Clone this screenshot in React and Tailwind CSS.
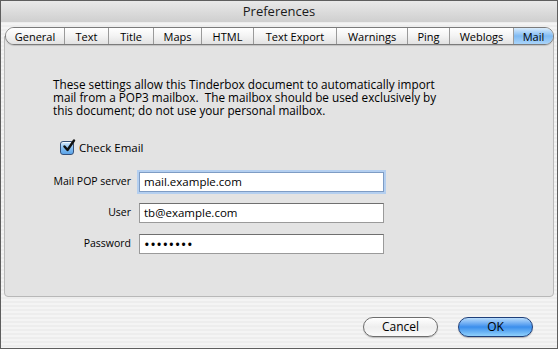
import React from 'react';

const tabs = [
  { label: 'General', w: 'w-[58px]' },
  { label: 'Text', w: 'w-[44px]' },
  { label: 'Title', w: 'w-[45px]' },
  { label: 'Maps', w: 'w-[48px]' },
  { label: 'HTML', w: 'w-[52px]' },
  { label: 'Text Export', w: 'w-[83px]' },
  { label: 'Warnings', w: 'w-[71px]' },
  { label: 'Ping', w: 'w-[42px]' },
  { label: 'Weblogs', w: 'w-[64px]' },
  { label: 'Mail', w: 'w-[40px]', active: true },
];

const fields = [
  { label: 'Mail POP server', value: 'mail.example.com', focus: true },
  { label: 'User', value: 'tb@example.com' },
  { label: 'Password', value: '••••••••', secret: true },
];

const CheckBox = () => (
  <div className="relative w-[14px] h-[14px] rounded-[3px] border border-[#34507a] bg-gradient-to-b from-[#d4e8fb] via-[#86bff2] to-[#5aa3e8] shadow-[inset_0_1px_0_rgba(255,255,255,0.7)]">
    <svg viewBox="0 0 14 14" className="absolute -top-[3px] left-[1px] w-[14px] h-[14px]">
      <path d="M2.5 7.5 L5.5 11 L12 1.5" fill="none" stroke="#111" strokeWidth="2.4" strokeLinecap="round" strokeLinejoin="round" />
    </svg>
  </div>
);

const App = () => {
  return (
    <div className="w-[558px] h-[349px] overflow-hidden border border-[#5e5e5e] font-['Open_Sans',sans-serif] text-[11px] text-black flex flex-col bg-[repeating-linear-gradient(180deg,#ededed_0px,#ededed_2px,#f4f4f4_2px,#f4f4f4_4px)]">
      {/* Title bar */}
      <div className="h-[21px] shrink-0 flex items-center justify-center bg-gradient-to-b from-[#e9e9e9] to-[#cfcfcf] text-[13px] text-[#1a1a1a]">
        Preferences
      </div>

      {/* Tabs */}
      <div className="relative z-10 mt-[5px] ml-[4px] flex">
        <div className="flex h-[18px] rounded-[9px] border border-[#7b7b7b] overflow-hidden shadow-[0_1px_1px_rgba(0,0,0,0.15)]">
          {tabs.map((t, i) => (
            <div
              key={t.label}
              className={`${t.w} ${i > 0 ? 'border-l border-[#9a9a9a]' : ''} ${
                t.active
                  ? 'bg-gradient-to-b from-[#d9ecfc] via-[#7fbaf2] to-[#a9d4fa]'
                  : 'bg-gradient-to-b from-white via-[#f3f3f3] to-[#e2e2e2]'
              } flex items-center justify-center text-[11px] leading-none`}
            >
              {t.label}
            </div>
          ))}
        </div>
      </div>

      {/* Panel */}
      <div className="-mt-[9px] mx-[3px] h-[261px] shrink-0 bg-[#e3e3e3] border border-[#b8b8b8] rounded-b-[4px] pt-[41px] pl-[48px]">
        <p className="leading-[13px] text-[11.75px]">
          These settings allow this Tinderbox document to automatically import
          <br />
          mail from a POP3 mailbox.&nbsp; The mailbox should be used exclusively by
          <br />
          this document; do not use your personal mailbox.
        </p>

        <div className="mt-[23px] ml-[7px] flex items-center gap-[5px] h-[16px]">
          <CheckBox />
          <span className="text-[11.5px]">Check Email</span>
        </div>

        <div className="mt-[16px] -ml-[48px] flex flex-col gap-[11px]">
          {fields.map((f) => (
            <div key={f.label} className="flex items-center">
              <div className="w-[134px] text-right pr-[8px] text-[10.5px]">{f.label}</div>
              <div
                className={`w-[245px] h-[20px] bg-white border ${
                  f.focus
                    ? 'border-[#7e9cc4] shadow-[0_0_0_2px_#b4cff0]'
                    : 'border-[#9a9a9a] border-t-[#6f6f6f]'
                } flex items-center pl-[4px] ${f.secret ? 'text-[15px] tracking-[0.5px]' : 'text-[11.5px]'}`}
              >
                {f.value}
              </div>
            </div>
          ))}
        </div>
      </div>

      {/* Buttons */}
      <div className="mt-[20px] flex justify-end gap-[20px] pr-[24px]">
        <button className="w-[75px] h-[20px] rounded-full border border-[#6d6d6d] bg-gradient-to-b from-white via-[#eeeeee] to-[#fafafa] text-[12px] leading-none shadow-[0_1px_1px_rgba(0,0,0,0.2)]">
          Cancel
        </button>
        <button className="w-[75px] h-[20px] rounded-full border border-[#1f3f7a] bg-gradient-to-b from-[#b8dcfb] via-[#3a8eec] to-[#8fd0fb] text-[12px] leading-none shadow-[0_1px_1px_rgba(0,0,0,0.25)]">
          OK
        </button>
      </div>
    </div>
  );
};

export default App;
